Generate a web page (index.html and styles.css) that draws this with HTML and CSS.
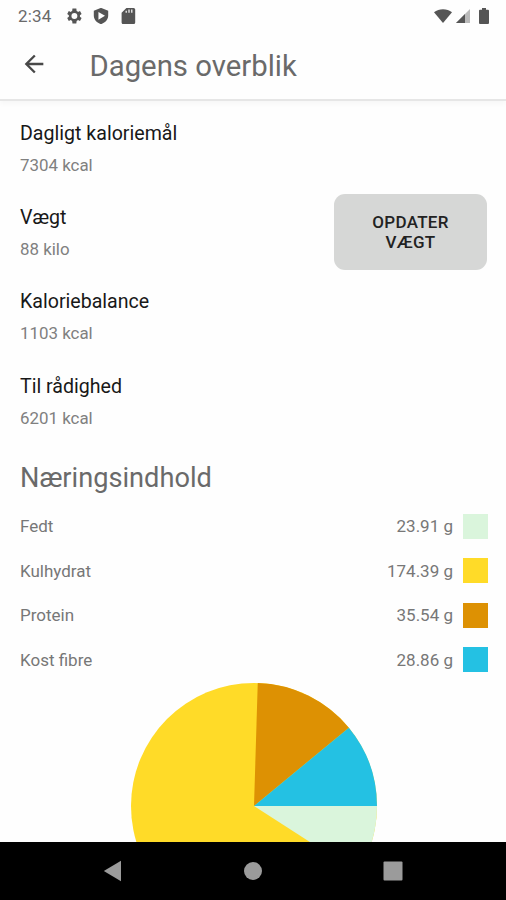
FILE: index.html
```html
<!DOCTYPE html>
<html lang="da">
<head>
  <meta charset="UTF-8">
  <meta name="viewport" content="width=device-width, initial-scale=1.0">
  <title>Dagens overblik</title>
  <link rel="stylesheet" href="styles.css">
</head>
<body>
  <div class="status-bar">
    <span class="clock">2:34</span>
    <div class="status-left">
      <svg class="icon-small" viewBox="2 2 20 20"><path fill-rule="evenodd" d="M19.4 13a7.500 7.500 0 0 0 0-2l2.100-1.600-2-3.500-2.500 1a7.500 7.500 0 0 0-1.700-1L14.900 2.500h-4.800l-.4 3.400a7.500 7.500 0 0 0-1.700 1l-2.500-1-2 3.500L5.600 11a7.500 7.500 0 0 0 0 2l-2.100 1.600 2 3.500 2.500-1a7.500 7.500 0 0 0 1.700 1l.4 3.400h4.800l.4-3.400a7.500 7.500 0 0 0 1.700-1l2.500 1 2-3.500zM12.500 15.700a3.700 3.700 0 1 1 0-7.400 3.700 3.700 0 0 1 0 7.400z"/></svg>
      <svg class="icon-small" viewBox="2 2 20 20"><path fill-rule="evenodd" d="M12 1.800L3 5.300v6.200c0 5 3.800 9.400 9 10.700 5.200-1.300 9-5.700 9-10.700V5.300zM8.800 7l8.200 4.800-8.200 4.900z"/></svg>
      <svg class="icon-small" viewBox="2 2 20 20"><path fill-rule="evenodd" d="M19 2H10L4 8v12c0 1.100.9 2 2 2h13c1.100 0 2-.9 2-2V4c0-1.100-.9-2-2-2zM9 5.500h1.500V8H9zm3.500-1.500H14v4h-1.500zM16 4h1.500v4H16z"/></svg>
    </div>
    <div class="status-right">
      <svg class="wifi" viewBox="0 0 18 14"><path d="M9 14L0 3.200C5 -.8 13 -.8 18 3.200z"/></svg>
      <svg class="signal" viewBox="0 0 14 14"><path d="M0 14L14 0v14z" opacity=".4"/><path d="M0 14L9 5v9z"/></svg>
      <svg class="battery" viewBox="0 0 10 16"><path d="M3 0h4v1.700h2q1 0 1 1V15q0 1-1 1H1q-1 0-1-1V2.700q0-1 1-1h2z"/></svg>
    </div>
  </div>

  <header class="toolbar">
    <svg class="back" viewBox="0 0 24 24"><path d="M20 11H7.830l5.590-5.590L12 4l-8 8 8 8 1.410-1.410L7.830 13H20v-2z"/></svg>
    <h1>Dagens overblik</h1>
  </header>

  <main class="content">
    <div class="stat">
      <div>
        <div class="label">Dagligt kaloriemål</div>
        <div class="value">7304 kcal</div>
      </div>
    </div>
    <div class="stat">
      <div>
        <div class="label">Vægt</div>
        <div class="value">88 kilo</div>
      </div>
      <button class="update">OPDATER<br>VÆGT</button>
    </div>
    <div class="stat">
      <div>
        <div class="label">Kaloriebalance</div>
        <div class="value">1103 kcal</div>
      </div>
    </div>
    <div class="stat">
      <div>
        <div class="label">Til rådighed</div>
        <div class="value">6201 kcal</div>
      </div>
    </div>

    <h2>Næringsindhold</h2>
    <div class="nutrient"><span>Fedt</span><span class="amount">23.91 g</span><i class="swatch fat"></i></div>
    <div class="nutrient"><span>Kulhydrat</span><span class="amount">174.39 g</span><i class="swatch carbs"></i></div>
    <div class="nutrient"><span>Protein</span><span class="amount">35.54 g</span><i class="swatch protein"></i></div>
    <div class="nutrient"><span>Kost fibre</span><span class="amount">28.86 g</span><i class="swatch fibre"></i></div>

    <svg class="pie" viewBox="-123 -123 246 246">
      <circle class="carbs" r="123"/>
      <path class="fat" d="M0 0H123A123 123 0 0 1 103.430 66.570z"/>
      <path class="protein" d="M0 0L3.760 -122.940A123 123 0 0 1 94.840 -78.320z"/>
      <path class="fibre" d="M0 0L94.840 -78.320A123 123 0 0 1 123 0z"/>
    </svg>
  </main>

  <nav class="nav-bar">
    <svg viewBox="0 0 20 22"><path d="M18 .8V21.200L.8 11z"/></svg>
    <svg viewBox="0 0 20 22"><circle cx="10" cy="11" r="9"/></svg>
    <svg viewBox="0 0 20 22"><rect x=".5" y="1.500" width="19" height="19" rx="1"/></svg>
  </nav>
</body>
</html>
```
FILE: styles.css
```css
* {
  margin: 0;
  padding: 0;
  box-sizing: border-box;
}

body {
  display: flex;
  flex-direction: column;
  height: 900px;
  overflow: hidden;
  background-color: #fefefe;
  color: #6a6a6a;
  font-family: Roboto, sans-serif;
}

svg {
  display: block;
  flex: none;
}

.status-bar {
  display: flex;
  align-items: center;
  flex: none;
  height: 31px;
  padding: 0 17px 0 18px;
  fill: #555;
}

.clock {
  width: 48px;
  font-size: 17px;
  letter-spacing: 0.2px;
}

.status-left {
  display: flex;
  gap: 11px;
}

.icon-small {
  width: 16px;
  height: 16px;
}

.status-right {
  display: flex;
  align-items: center;
  margin-left: auto;
}

.wifi {
  width: 18px;
  height: 14px;
  margin-right: 4px;
}

.signal {
  width: 14px;
  height: 14px;
  margin-right: 9px;
}

.battery {
  width: 10px;
  height: 16px;
}

.toolbar {
  display: flex;
  align-items: center;
  flex: none;
  height: 70px;
  padding: 0 20px 1px 19.500px;
  border-bottom: 2px solid #e6e6e6;
  box-shadow: 0 3px 5px rgba(0, 0, 0, 0.03);
}

.back {
  width: 28px;
  height: 28px;
  margin: 0 42px 2px 0;
  fill: #484848;
}

h1 {
  padding-top: 3px;
  font-size: 29.300px;
  font-weight: 400;
  line-height: 36px;
}

.content {
  flex: 1;
  min-height: 0;
  overflow: hidden;
  padding: 20px 18px 0 20px;
}

.stat {
  display: flex;
  justify-content: space-between;
  height: 84.200px;
}

.label {
  color: #181818;
  font-size: 19.600px;
  line-height: 26px;
}

.value {
  margin-top: 7px;
  color: #808080;
  font-size: 16.900px;
  line-height: 22px;
}

.update {
  width: 153px;
  height: 76px;
  margin: -11px 1px 0 0;
  border: none;
  border-radius: 11px;
  background-color: #d6d7d6;
  color: #222;
  font-family: inherit;
  font-size: 17px;
  font-weight: 500;
  letter-spacing: 0.3px;
  line-height: 20px;
}

h2 {
  height: 46px;
  font-size: 27.200px;
  font-weight: 400;
  line-height: 40px;
}

.nutrient {
  display: flex;
  align-items: center;
  height: 44.600px;
  color: #777;
  font-size: 17px;
}

.amount {
  margin-left: auto;
}

.swatch {
  width: 25px;
  height: 25px;
  margin-left: 10px;
}

.fat {
  background-color: #daf5dc;
  fill: #daf5dc;
}

.carbs {
  background-color: #ffdb28;
  fill: #ffdb28;
}

.protein {
  background-color: #dd9103;
  fill: #dd9103;
}

.fibre {
  background-color: #24c1e3;
  fill: #24c1e3;
}

/* slices share the swatch classes, only the fill should show here */
.pie * {
  background: none;
}

.pie {
  width: 246px;
  height: 246px;
  margin: 1px auto 0;
}

.nav-bar {
  display: flex;
  justify-content: space-between;
  flex: none;
  height: 58px;
  padding: 18px 103px 0;
  background-color: #000;
  fill: #9b9b9b;
}

.nav-bar svg {
  width: 20px;
  height: 22px;
}
```
